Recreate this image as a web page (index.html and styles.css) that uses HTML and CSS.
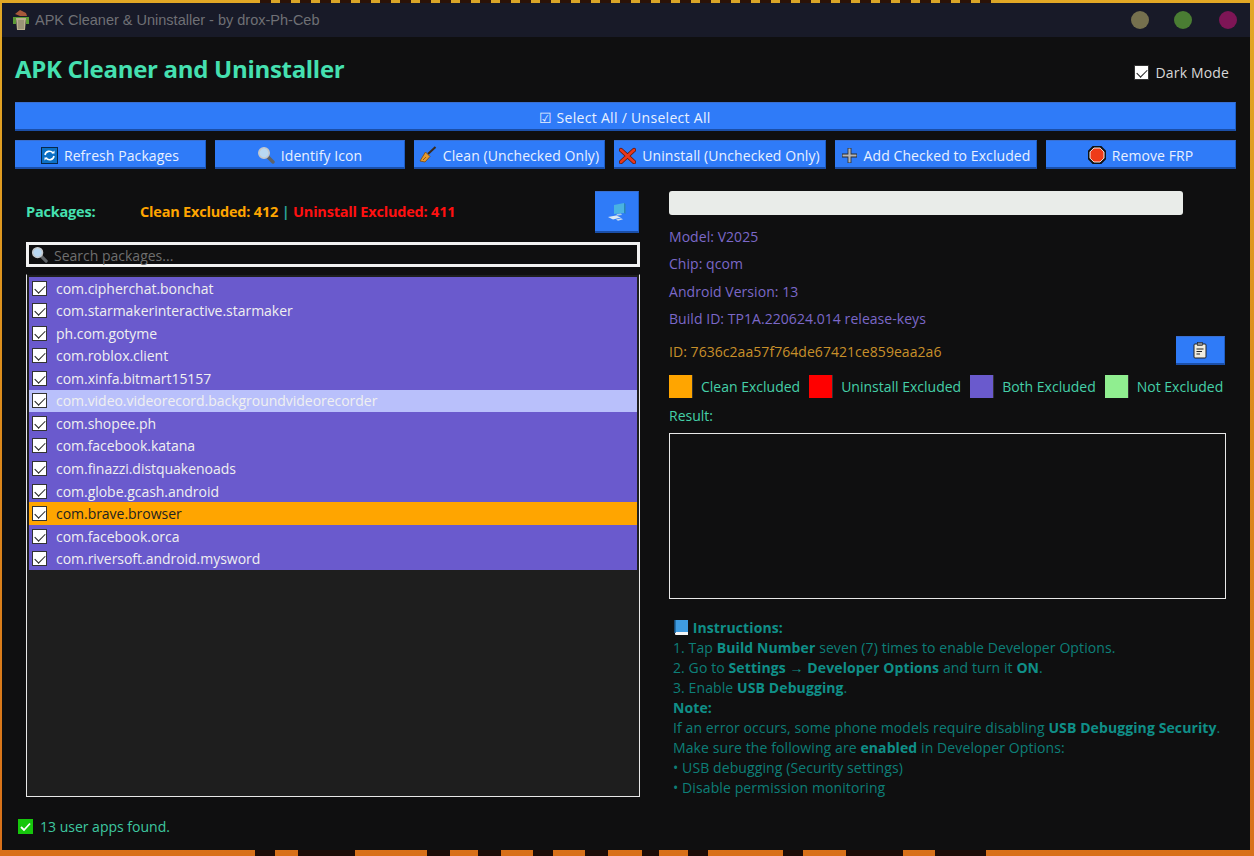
FILE: index.html
```html
<!DOCTYPE html>
<html>
<head>
	<meta charset="utf-8">
	<title>APK Cleaner &amp; Uninstaller</title>
	<link rel="stylesheet" href="styles.css">
</head>
<body>

	<div class="window">
		<div class="titlebar">
			<svg class="app-icon" width="20" height="22" viewBox="0 0 20 22">
				<path d="M4 5 L9 1 L15 4 L16 7 L9 7 Z" fill="#a5583a"/>
				<path d="M2 8 H18 V15 H15 V11 H5 V15 H2 Z" fill="#5c9a35"/>
				<path d="M5 9 H15 L14 21 H6 Z" fill="#b9b08e"/>
				<path d="M8 11 V20 M10 11 V20 M12 11 V20" stroke="#7d7660" stroke-width="1"/>
			</svg>
			<span class="titlebar-text">APK Cleaner &amp; Uninstaller - by drox-Ph-Ceb</span>
			<div class="win-controls">
				<span class="win-dot dot-min"></span>
				<span class="win-dot dot-max"></span>
				<span class="win-dot dot-close"></span>
			</div>
		</div>

		<div class="content">
			<div class="header">
				<h1 class="app-title">APK Cleaner and Uninstaller</h1>
				<label class="dark-mode"><span class="check"></span>Dark Mode</label>
			</div>

			<button class="btn btn-wide">☑ Select All / Unselect All</button>

			<div class="toolbar">
				<button class="btn">
					<svg class="btn-icon" width="17" height="17" viewBox="0 0 17 17">
						<rect x="0.5" y="0.5" width="16" height="16" fill="#0b6fc4" stroke="#08284a"/>
						<path d="M4 8 A4.5 4.5 0 0 1 12 6 M13 9 A4.5 4.5 0 0 1 5 11" fill="none" stroke="#fff" stroke-width="1.6"/>
						<path d="M10.5 6.5 H13.5 V3.5 Z M6.5 10.5 H3.5 V13.5 Z" fill="#fff"/>
					</svg>
					Refresh Packages
				</button>
				<button class="btn">
					<svg class="btn-icon" width="18" height="18" viewBox="0 0 18 18">
						<path d="M10 10 L16 16" stroke="#5f6367" stroke-width="3.4" stroke-linecap="round"/>
						<circle cx="7" cy="7" r="5.2" fill="#b9d8f2" stroke="#c4c8cc" stroke-width="1.6"/>
					</svg>
					Identify Icon
				</button>
				<button class="btn">
					<svg class="btn-icon" width="18" height="18" viewBox="0 0 18 18">
						<path d="M9 8 L16.5 1" stroke="#3a2a1c" stroke-width="2"/>
						<path d="M6.5 6 L11 10.5 L6 16 L1 15 Z" fill="#e59a2e" stroke="#7a4a12" stroke-width="0.8"/>
						<path d="M4 14 L7 11" stroke="#7a4a12" stroke-width="0.8"/>
					</svg>
					Clean (Unchecked Only)
				</button>
				<button class="btn">
					<svg class="btn-icon" width="17" height="17" viewBox="0 0 17 17">
						<path d="M2 3 L15 15 M15 3 L2 15" stroke="#5c1a10" stroke-width="4.4" stroke-linecap="round"/>
						<path d="M2 3 L15 15 M15 3 L2 15" stroke="#e8371e" stroke-width="2.8" stroke-linecap="round"/>
					</svg>
					Uninstall (Unchecked Only)
				</button>
				<button class="btn">
					<svg class="btn-icon" width="17" height="17" viewBox="0 0 17 17">
						<path d="M8.5 1 V16 M1 8.5 H16" stroke="#2b2b2b" stroke-width="3.8"/>
						<path d="M8.5 1.5 V15.5 M1.5 8.5 H15.5" stroke="#b5b5b5" stroke-width="2.2"/>
					</svg>
					Add Checked to Excluded
				</button>
				<button class="btn">
					<svg class="btn-icon" width="18" height="18" viewBox="0 0 18 18">
						<path d="M5.5 1 H12.5 L17 5.5 V12.5 L12.5 17 H5.5 L1 12.5 V5.5 Z" fill="#ee3b18" stroke="#111" stroke-width="2.6"/>
						<path d="M5.9 2 H12.1 L16 5.9 V12.1 L12.1 16 H5.9 L2 12.1 V5.9 Z" fill="#ee3b18" stroke="#fff" stroke-width="0.9"/>
					</svg>
					Remove FRP
				</button>
			</div>

			<div class="main">
				<div class="left-col">
					<div class="packages-bar">
						<span class="packages-label">Packages:</span>
						<span class="excluded-info"><span class="text-clean">Clean Excluded: 412</span> <span class="sep">|</span> <span class="text-uninstall">Uninstall Excluded: 411</span></span>
						<button class="btn btn-device">
							<svg width="22" height="20" viewBox="0 0 22 20">
								<path d="M8 3 L18 1 V11 L8 12 Z" fill="#49b2e2"/>
								<path d="M18 1 L19.5 2 V12 L18 11 Z" fill="#2a86b4"/>
								<path d="M11 12 L15 11.5 L16 13 L10 13.8 Z" fill="#a9cbe6"/>
								<path d="M2 15 L10 13.5 L15 15.5 L7 17.5 Z" fill="#dce8f2"/>
								<path d="M10 17.5 L15 16.2 L17 17.2 L12 18.7 Z" fill="#cfdeec"/>
							</svg>
						</button>
					</div>

					<div class="search-box">
						<svg width="17" height="17" viewBox="0 0 18 18">
							<path d="M10 10 L16 16" stroke="#5f6367" stroke-width="3.4" stroke-linecap="round"/>
							<circle cx="7" cy="7" r="5.2" fill="#b9d8f2" stroke="#c4c8cc" stroke-width="1.6"/>
						</svg>
						<span class="search-placeholder">Search packages...</span>
					</div>

					<div class="package-list">
						<div class="pkg pkg-both"><span class="check"></span>com.cipherchat.bonchat</div>
						<div class="pkg pkg-both"><span class="check"></span>com.starmakerinteractive.starmaker</div>
						<div class="pkg pkg-both"><span class="check"></span>ph.com.gotyme</div>
						<div class="pkg pkg-both"><span class="check"></span>com.roblox.client</div>
						<div class="pkg pkg-both"><span class="check"></span>com.xinfa.bitmart15157</div>
						<div class="pkg pkg-hover"><span class="check"></span>com.video.videorecord.backgroundvideorecorder</div>
						<div class="pkg pkg-both"><span class="check"></span>com.shopee.ph</div>
						<div class="pkg pkg-both"><span class="check"></span>com.facebook.katana</div>
						<div class="pkg pkg-both"><span class="check"></span>com.finazzi.distquakenoads</div>
						<div class="pkg pkg-both"><span class="check"></span>com.globe.gcash.android</div>
						<div class="pkg pkg-clean"><span class="check"></span>com.brave.browser</div>
						<div class="pkg pkg-both"><span class="check"></span>com.facebook.orca</div>
						<div class="pkg pkg-both"><span class="check"></span>com.riversoft.android.mysword</div>
					</div>
				</div>

				<div class="right-col">
					<div class="device-bar"></div>
					<div class="info-line">Model: V2025</div>
					<div class="info-line">Chip: qcom</div>
					<div class="info-line">Android Version: 13</div>
					<div class="info-line">Build ID: TP1A.220624.014 release-keys</div>
					<div class="id-row">
						<span class="id-text">ID: 7636c2aa57f764de67421ce859eaa2a6</span>
						<button class="btn btn-copy">
							<svg width="14" height="17" viewBox="0 0 14 17">
								<rect x="1" y="2" width="12" height="14" rx="1" fill="#f0ede0" stroke="#222"/>
								<rect x="4.5" y="0.5" width="5" height="3" fill="#888" stroke="#222" stroke-width="0.6"/>
								<path d="M3.5 7 H10.5 M3.5 9.5 H9 M3.5 12 H7" stroke="#222" stroke-width="1.2"/>
							</svg>
						</button>
					</div>
					<div class="legend">
						<span class="swatch sw-clean"></span><span class="legend-text">Clean Excluded</span>
						<span class="swatch sw-uninstall"></span><span class="legend-text">Uninstall Excluded</span>
						<span class="swatch sw-both"></span><span class="legend-text">Both Excluded</span>
						<span class="swatch sw-none"></span><span class="legend-text">Not Excluded</span>
					</div>
					<div class="result-label">Result:</div>
					<div class="result-box"></div>
					<div class="instructions">
						<div>
							<svg class="book" width="16" height="17" viewBox="0 0 16 17">
								<path d="M2 1 H15 V13 H3 Q2 13 2 14 Z" fill="#3f9be0"/>
								<path d="M2 14 Q2 13 3 13 H15 V16 H3 Q2 16 2 15 Z" fill="#f4f4f4"/>
								<path d="M2 1 V14" stroke="#1d5f94" stroke-width="1.5"/>
							</svg>
							<b>Instructions:</b>
						</div>
						<div>1. Tap <b>Build Number</b> seven (7) times to enable Developer Options.</div>
						<div>2. Go to <b>Settings → Developer Options</b> and turn it <b>ON</b>.</div>
						<div>3. Enable <b>USB Debugging</b>.</div>
						<div><b>Note:</b></div>
						<div>If an error occurs, some phone models require disabling <b>USB Debugging Security</b>.</div>
						<div>Make sure the following are <b>enabled</b> in Developer Options:</div>
						<div>• USB debugging (Security settings)</div>
						<div>• Disable permission monitoring</div>
					</div>
				</div>
			</div>

			<div class="status">
				<svg width="15" height="15" viewBox="0 0 15 15">
					<rect width="15" height="15" fill="#16c60c"/>
					<path d="M3 8 L6 11 L12 4.5" fill="none" stroke="#fff" stroke-width="1.8"/>
				</svg>
				13 user apps found.
			</div>
		</div>
	</div>

</body>
</html>
```

FILE: styles.css
```css
* {
	box-sizing: border-box;
}
html, body {
	height: 100%;
}
body {
	margin: 0;
	padding: 3px 4px 6px 2px;
	overflow: hidden;
	font-family: "Open Sans", "Noto Sans", sans-serif;
	font-size: 14px;
	letter-spacing: 0;
	background:
		linear-gradient(90deg, transparent 255px, #1e0c08 255px, #1e0c08 275px, transparent 275px, transparent 298px, #1e0c08 298px, #1e0c08 355px, transparent 355px, transparent 427px, #1e0c08 427px, #1e0c08 450px, transparent 450px, transparent 478px, #1e0c08 478px, #1e0c08 501px, transparent 501px, transparent 533px, #1e0c08 533px, #1e0c08 553px, transparent 553px, transparent 585px, #1e0c08 585px, #1e0c08 608px, transparent 608px, transparent 642px, #1e0c08 642px, #1e0c08 659px, transparent 659px, transparent 688px, #1e0c08 688px, #1e0c08 708px, transparent 708px, transparent 783px, #1e0c08 783px, #1e0c08 803px, transparent 803px, transparent 846px, #1e0c08 846px, #1e0c08 903px, transparent 903px, transparent 935px, #1e0c08 935px, #1e0c08 986px, transparent 986px) bottom / 100% 6px no-repeat,
		repeating-linear-gradient(90deg, #2a1208 0, #2a1208 11px, #d9a427 11px, #d9a427 20px) 260px 0 / 740px 3px no-repeat,
		linear-gradient(180deg, #e2a825 0%, #dc8a1c 50%, #d8701a 100%);
}

/* window frame */
.window {
	display: flex;
	flex-direction: column;
	height: 100%;
	background: #0f0f10;
}
.titlebar {
	display: flex;
	align-items: center;
	height: 34px;
	padding-left: 9px;
	background: #181a28;
	flex: none;
}
.app-icon {
	margin-right: 4px;
}
.titlebar-text {
	font-family: "Liberation Sans", Arial, sans-serif;
	font-size: 14.5px;
	letter-spacing: 0;
	color: #6f7075;
}
.win-controls {
	display: flex;
	margin-left: auto;
	padding-right: 13px;
}
.win-dot {
	width: 18px;
	height: 18px;
	border-radius: 50%;
}
.dot-min {
	background: #75704e;
}
.dot-max {
	margin-left: 25px;
	background: #4a7d33;
}
.dot-close {
	margin-left: 27px;
	background: #7e1556;
}

.content {
	flex: 1;
	display: flex;
	flex-direction: column;
	padding: 0 14px 0 13px;
}
.header {
	display: flex;
	align-items: center;
	justify-content: space-between;
	height: 65px;
}
.app-title {
	margin: 0 0 2px;
	font-size: 24px;
	font-weight: 700;
	letter-spacing: -0.3px;
	color: #45e0b0;
}
.dark-mode {
	display: flex;
	align-items: center;
	gap: 7px;
	margin: 5px 7px 0 0;
	letter-spacing: 0.15px;
	color: #d8d8d8;
}

.check {
	position: relative;
	display: inline-block;
	flex: none;
	width: 15px;
	height: 15px;
	background: #fff;
	border: 1px solid #333;
}
.check::after {
	content: "";
	position: absolute;
	left: 4px;
	top: 1px;
	width: 5px;
	height: 9px;
	border: solid #222;
	border-width: 0 1.5px 1.5px 0;
	transform: rotate(45deg);
}

.btn {
	display: flex;
	align-items: center;
	justify-content: center;
	gap: 6px;
	padding: 2px 0 0;
	font: inherit;
	letter-spacing: 0.08px;
	color: #e8f0ff;
	background: #2f7bf8;
	border: 0;
	border-bottom: 2px solid #1b4fa8;
	border-right: 1px solid #1f5ec4;
	border-top: 1px solid #3a6fd0;
}
.btn-wide {
	width: 100%;
	height: 29px;
	letter-spacing: 0.3px;
}
.toolbar {
	display: grid;
	grid-template-columns: 191px 190px 191px 212px 202px 190px;
	gap: 9px;
	height: 29px;
	margin-top: 9px;
}
.btn-icon {
	flex: none;
}

.main {
	display: flex;
	margin-top: 21px;
	padding-left: 11px;
}
.left-col {
	width: 614px;
}
.packages-bar {
	display: flex;
	align-items: center;
	height: 42px;
	padding-top: 1px;
	font-size: 14.5px;
	font-weight: 700;
	letter-spacing: -0.2px;
}
.packages-label {
	width: 114px;
	color: #45e0b0;
}
.excluded-info {
	color: #2aa198;
}
.text-clean {
	color: #ffa500;
}
.text-uninstall {
	color: #ff1010;
}
.btn-device {
	width: 44px;
	height: 42px;
	margin-left: auto;
	margin-right: 1px;
}

.search-box {
	display: flex;
	align-items: center;
	gap: 6px;
	height: 25px;
	margin-top: 10px;
	padding-left: 2px;
	border: 3px solid #f2f2f2;
	background: #0f0f10;
}
.search-placeholder {
	padding-top: 1px;
	color: #6e6e6e;
}
.package-list {
	height: 523px;
	margin-top: 7px;
	padding: 2px 2px 0;
	background: #1e1e1e;
	border: 1px solid #e8e8e8;
	border-top-color: #0f0f10;
}
.pkg {
	display: flex;
	align-items: center;
	gap: 9px;
	height: 22.54px;
	padding-left: 3px;
	letter-spacing: -0.03px;
	color: #f0f0f0;
}
.pkg-both {
	background: #6a5acd;
}
.pkg-hover {
	background: #b9c0fb;
}
.pkg-clean {
	background: #ffa500;
	color: #222;
}

.right-col {
	width: 557px;
	margin-left: 29px;
	margin-top: 1px;
}
.device-bar {
	width: 514px;
	height: 24px;
	background: #e9ece9;
	border-radius: 3px;
}
.info-line {
	height: 27.4px;
	line-height: 27.4px;
	letter-spacing: 0.05px;
	color: #7b68c8;
}
.device-bar + .info-line {
	margin-top: 8px;
}
.id-row {
	display: flex;
	align-items: center;
	justify-content: space-between;
	height: 29px;
	margin-top: 3px;
	padding-right: 1px;
}
.id-text {
	padding-top: 2px;
	letter-spacing: 0.05px;
	color: #c8902a;
}
.btn-copy {
	width: 49px;
	height: 29px;
}
.legend {
	display: flex;
	align-items: center;
	gap: 9px;
	height: 23px;
	margin-top: 10px;
	white-space: nowrap;
	color: #45d0a8;
}
.swatch {
	flex: none;
	width: 23px;
	height: 23px;
	box-shadow: 1px 0 0 rgba(255, 255, 255, 0.15);
}
.sw-clean {
	background: #ffa500;
}
.sw-uninstall {
	background: #ff0000;
}
.sw-both {
	background: #6a5acd;
}
.sw-none {
	background: #90ee90;
}
.result-label {
	margin-top: 8px;
	line-height: 20px;
	color: #45d0a8;
}
.result-box {
	height: 166px;
	margin-top: 7px;
	border: 1px solid #e8e8e8;
	background: #0f0f10;
}
.instructions {
	margin-top: 19px;
	padding-left: 4px;
	line-height: 20px;
	letter-spacing: 0.1px;
	color: #0d7f78;
}
.instructions b {
	color: #0f8f88;
}
.book {
	vertical-align: -3px;
}

.status {
	display: flex;
	align-items: center;
	gap: 7px;
	margin-top: 19px;
	padding-left: 3px;
	color: #3ec8a0;
}
```
